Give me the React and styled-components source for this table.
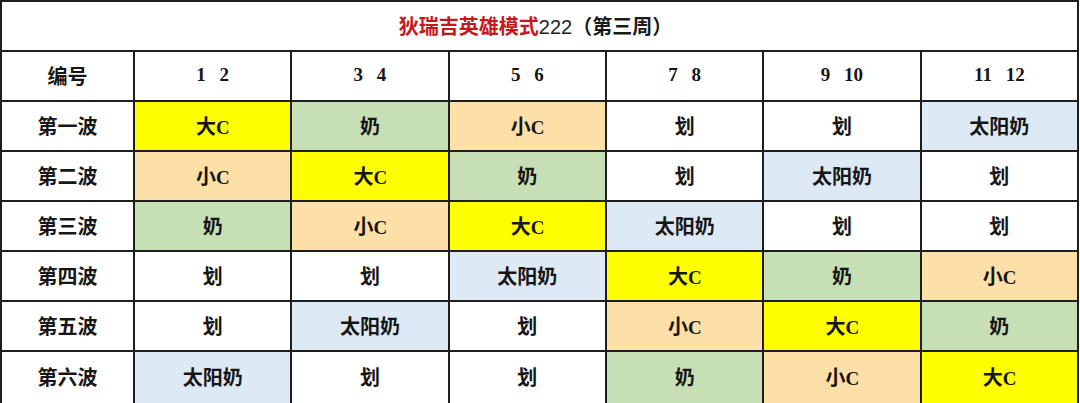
import React from "react";
import styled, { createGlobalStyle } from "styled-components";

const Global = createGlobalStyle`
  html, body { margin: 0; padding: 0; background: #ffffff; }
  body { width: 1080px; height: 403px; overflow: hidden; }
`;

const COLORS = {
  big: "#ffff00",
  milk: "#c6dfb5",
  small: "#fde0a7",
  sun: "#dde9f5",
  cut: "#ffffff",
};

const Grid = styled.div`
  box-sizing: border-box;
  width: 1079px;
  height: 403px;
  display: grid;
  grid-template-columns: 131px repeat(6, 1fr);
  grid-template-rows: repeat(7, 48px) 51px;
  gap: 2px;
  padding: 2px 2px 0 2px;
  background: #1e1e1e;
  overflow: hidden;
  font-family: "Liberation Serif", "Noto Sans CJK SC", serif;
  color: #161616;
`;

const Title = styled.div`
  grid-column: 1 / -1;
  background: #fff;
  display: flex;
  align-items: center;
  justify-content: center;
  padding-right: 8px;
  padding-bottom: 2px;
`;

const TitleText = styled.span`
  font-size: 20px;
  font-weight: 700;
`;

const Red = styled.span`
  color: #c8161d;
  font-family: "Noto Sans CJK SC", sans-serif;
  font-weight: 700;
`;

const Num = styled.span`
  font-family: "Liberation Sans", sans-serif;
  font-weight: 400;
  color: #222;
`;

const Paren = styled.span`
  font-family: "Noto Sans CJK SC", sans-serif;
  font-weight: 700;
  color: #1a1a1a;
`;

const Cell = styled.div`
  background: ${(p) => p.$bg || "#fff"};
  display: flex;
  align-items: center;
  justify-content: center;
  font-weight: 700;
  white-space: pre;
  padding-bottom: 2px;
`;

const CellText = styled.span`
  font-family: "Noto Sans CJK SC", sans-serif;
  font-size: 20px;
`;

const Latin = styled.span`
  font-family: "Liberation Serif", serif;
  font-weight: 700;
  font-size: 19px;
  letter-spacing: -0.5px;
`;

const HeadText = styled.span`
  font-family: "Liberation Serif", serif;
  font-size: 19px;
  word-spacing: 9px;
`;

const heads = ["1 2", "3 4", "5 6", "7 8", "9 10", "11 12"];
const waves = ["第一波", "第二波", "第三波", "第四波", "第五波", "第六波"];

const TEXT = {
  big: ["大", "C"],
  milk: ["奶"],
  small: ["小", "C"],
  sun: ["太阳奶"],
  cut: ["划"],
};

const rows = [
  ["big", "milk", "small", "cut", "cut", "sun"],
  ["small", "big", "milk", "cut", "sun", "cut"],
  ["milk", "small", "big", "sun", "cut", "cut"],
  ["cut", "cut", "sun", "big", "milk", "small"],
  ["cut", "sun", "cut", "small", "big", "milk"],
  ["sun", "cut", "cut", "milk", "small", "big"],
];

export default function App() {
  return (
    <>
      <Global />
      <Grid>
        <Title>
          <TitleText>
            <Red>狄瑞吉英雄模式</Red>
            <Num>222</Num>
            <Paren>（第三周）</Paren>
          </TitleText>
        </Title>
        <Cell>
          <CellText>编号</CellText>
        </Cell>
        {heads.map((h) => (
          <Cell key={h}>
            <HeadText>{h}</HeadText>
          </Cell>
        ))}
        {rows.map((r, i) => (
          <React.Fragment key={i}>
            <Cell>
              <CellText>{waves[i]}</CellText>
            </Cell>
            {r.map((k, j) => (
              <Cell key={j} $bg={COLORS[k]}>
                <CellText>
                  {TEXT[k][0]}
                  {TEXT[k][1] && <Latin>{TEXT[k][1]}</Latin>}
                </CellText>
              </Cell>
            ))}
          </React.Fragment>
        ))}
      </Grid>
    </>
  );
}
